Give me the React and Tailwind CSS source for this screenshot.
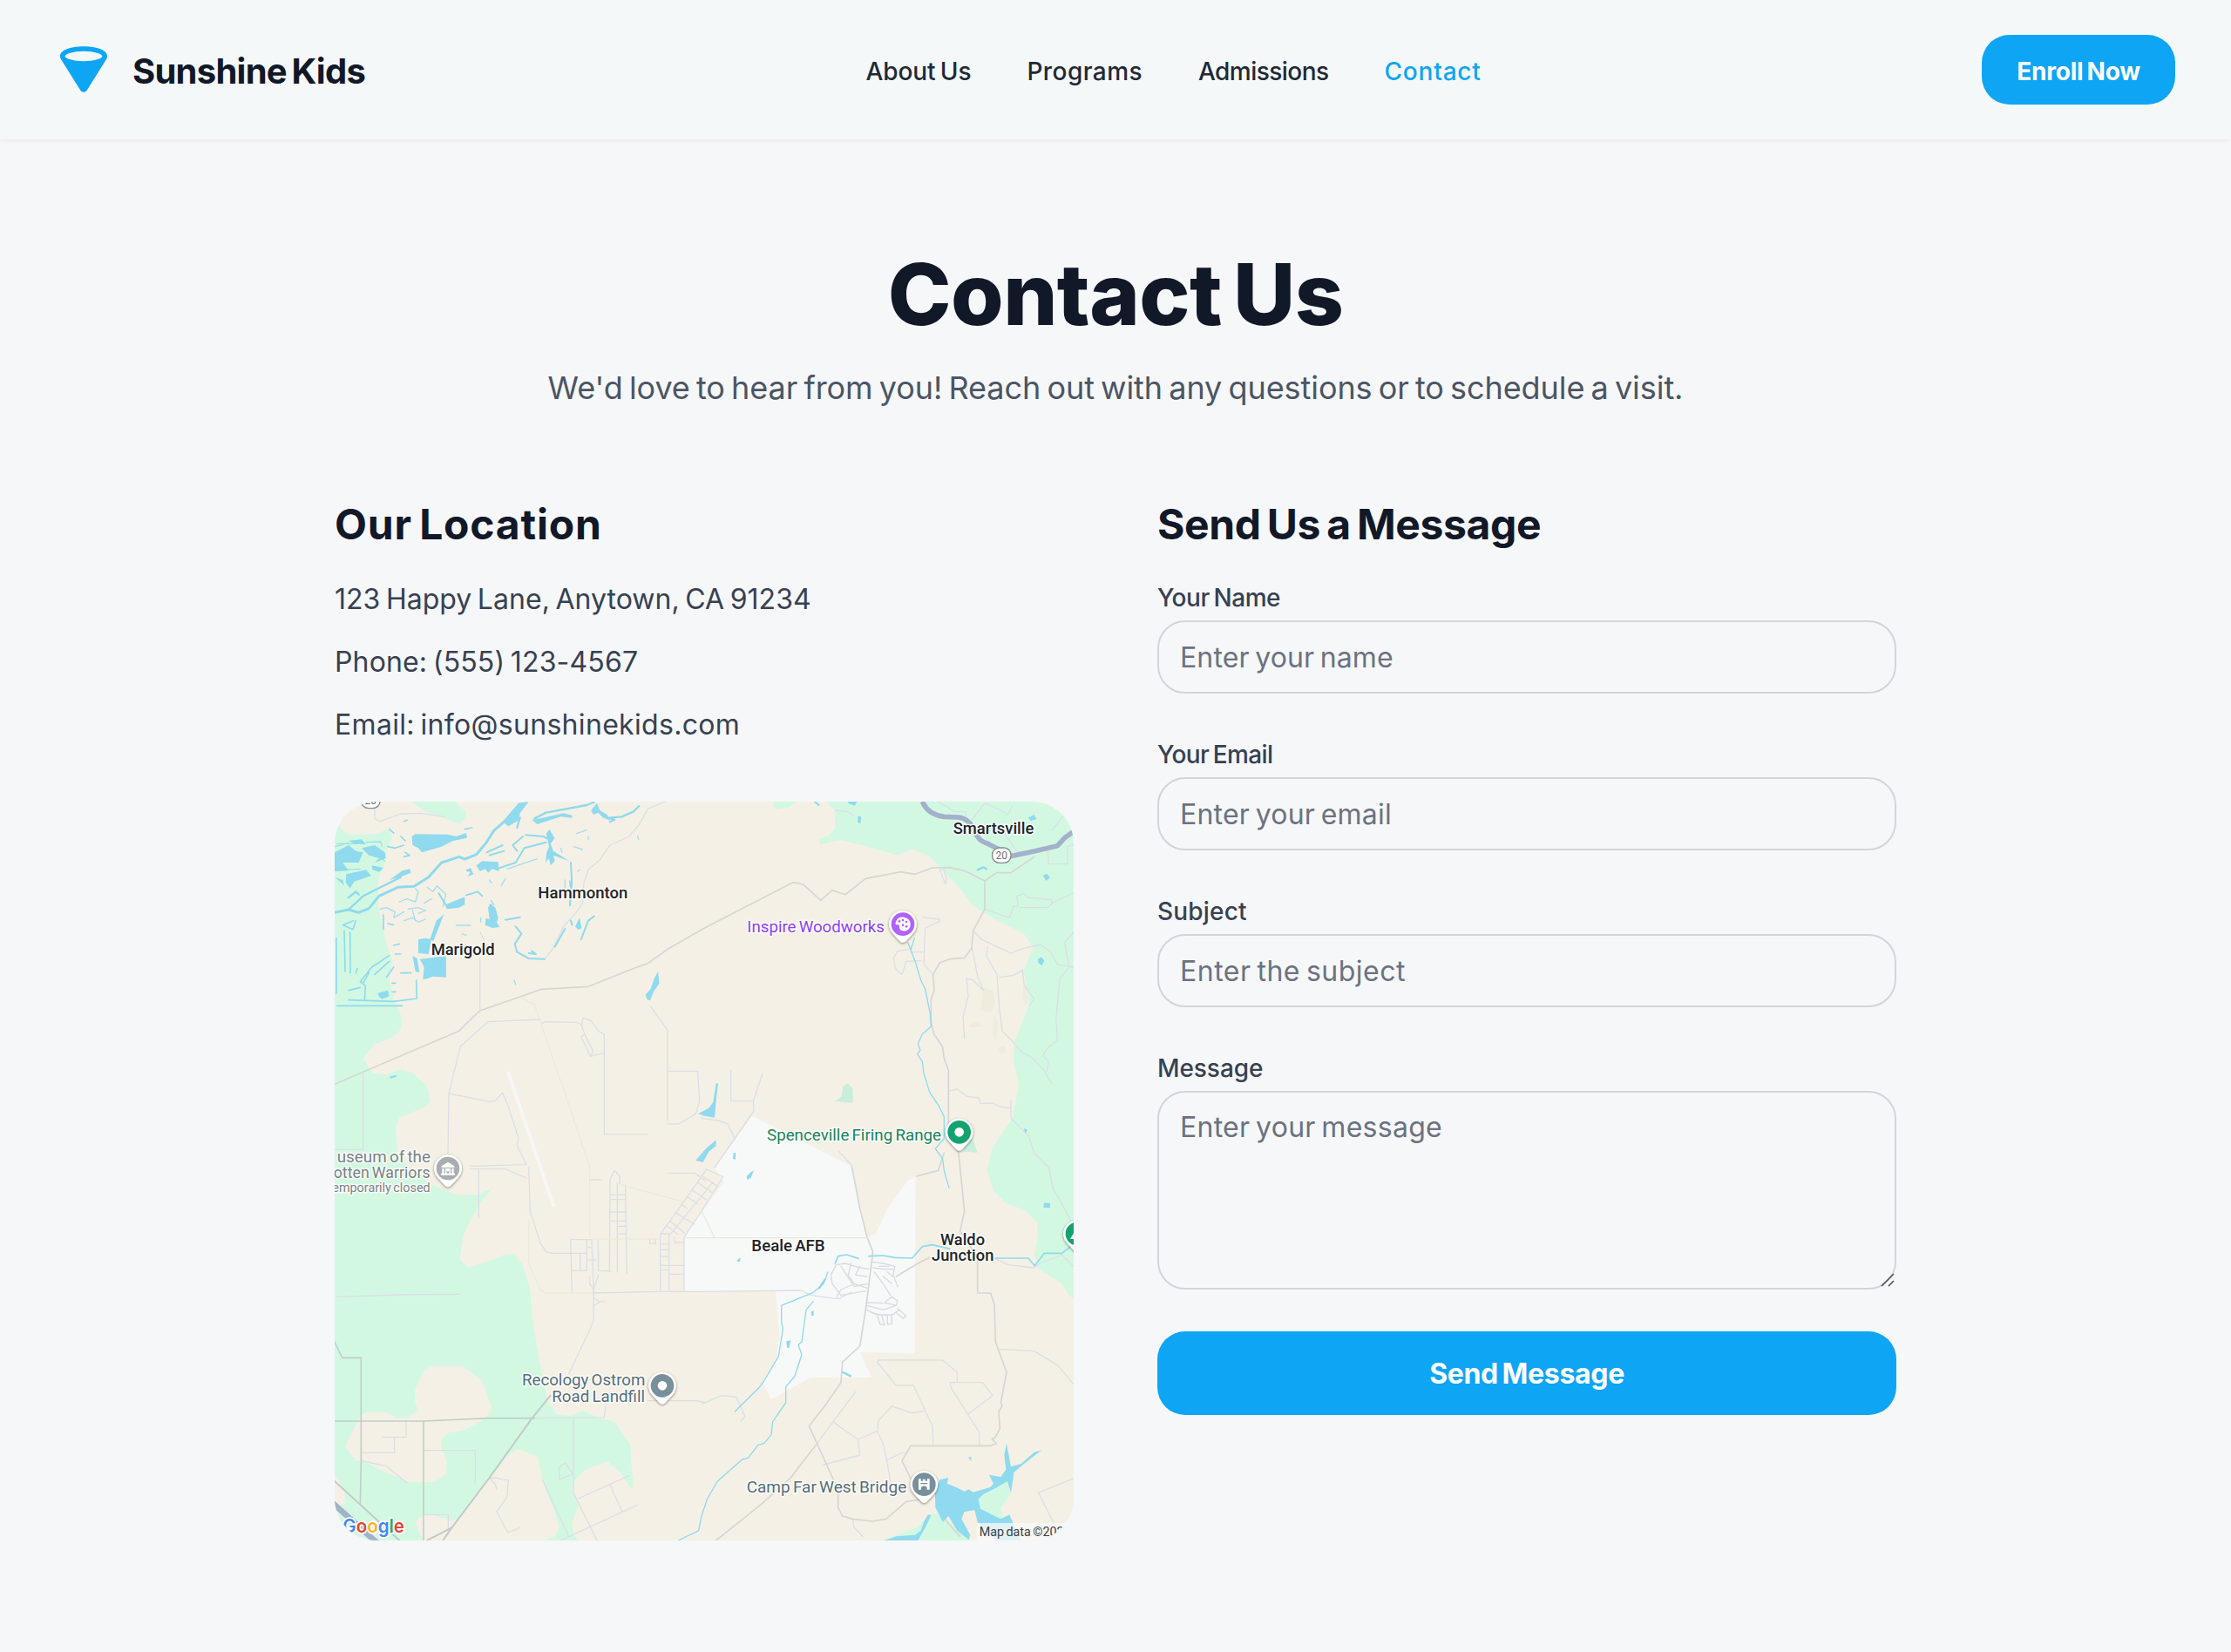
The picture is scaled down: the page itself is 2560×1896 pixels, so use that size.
import { useId } from "react";

const NAV = [
  { label: "About Us", className: "tracking-[-0.05px] text-[#1f2937]" },
  { label: "Programs", className: "tracking-[0.43px] text-[#1f2937]" },
  { label: "Admissions", className: "tracking-[-0.54px] text-[#1f2937]" },
  { label: "Contact", className: "tracking-[0.8px] text-[#0ea5f5]" },
];

const FIELDS = [
  {
    label: "Your Name",
    placeholder: "Enter your name",
    labelClass: "tracking-[-0.47px]",
    inputClass: "tracking-[0.12px]",
  },
  {
    label: "Your Email",
    placeholder: "Enter your email",
    labelClass: "tracking-[-0.62px]",
    inputClass: "tracking-[0.21px]",
  },
  {
    label: "Subject",
    placeholder: "Enter the subject",
    labelClass: "tracking-[0.18px]",
    inputClass: "tracking-[0.5px]",
  },
];

function Logo() {
  return (
    <svg viewBox="0 0 64 64" className="size-16" aria-hidden="true">
      <path
        fill="#0ea5f5"
        fillRule="evenodd"
        d="M32 5.2C17 5.2 5 9.2 5 16.4c0 1.6.6 3 1.6 4.6L28.200 55.600c1.800 2.900 5.800 2.900 7.600 0L57.400 21c1-1.600 1.600-3 1.600-4.600C59 9.200 47 5.200 32 5.200ZM32 10.800c12 0 21.400 3.200 21.400 5.700S44 22.200 32 22.200 10.600 19 10.600 16.500 20 10.800 32 10.800Z"
      />
    </svg>
  );
}

function Header() {
  return (
    <header className="relative flex h-40 items-center justify-between bg-[#f4f8f9] px-16 shadow-[0_2px_4px_rgba(0,0,0,0.05)]">
      <div className="flex items-center gap-6">
        <Logo />
        <span className="pt-[3px] text-[40px] leading-none font-bold tracking-[-0.74px] text-[#111827]">
          Sunshine Kids
        </span>
      </div>
      <nav className="flex items-center gap-16 pt-1">
        {NAV.map((item) => (
          <a key={item.label} className={`text-[28px] leading-10 font-medium ${item.className}`}>
            {item.label}
          </a>
        ))}
      </nav>
      <button className="flex h-20 w-[222px] items-center justify-center rounded-[32px] bg-[#0ea5f5] pt-[3px] text-[28px] leading-10 font-bold tracking-[-0.23px] text-white">
        Enroll Now
      </button>
    </header>
  );
}

const WEST_GREEN =
  "M12 100L30 115Q45 138 65 145L150 142L195 125L212 150L190 200L185 240L162 300V390L175 460L195 530L212 580L200 640L215 710L243 770L240 815L205 845L150 865L110 915L145 965L190 970L235 952L275 960L330 1010L342 1062L325 1080L270 1105L235 1118L222 1150L228 1240L270 1290L300 1310L350 1350L440 1385L500 1383L555 1362L520 1405L480 1470L455 1525L443 1605L470 1635L560 1605L600 1588H630L660 1625L685 1710L695 1830L720 1970L745 2090L775 2140L825 2145L865 2127L920 2150L975 2165L1030 2245L1035 2330L1042 2380L1035 2400L990 2335L950 2302L875 2330L838 2370L835 2410L850 2460L830 2510L835 2555L855 2574H730L770 2560L785 2530L765 2465L727 2365L710 2285L640 2258L600 2290L560 2345L500 2410L440 2500L410 2505L350 2487H315L290 2510L310 2560L315 2574H12Z";

function Land() {
  return (
    <>
      <rect x="12" y="30" width="2544" height="2544" fill="#f5f0e5" />
      <g fill="#d3f8e2">
        <path d={WEST_GREEN} />
        <path d="M275 30H425L465 65L463 88L440 107L320 62Z" />
        <path d="M1705 30L1733 60L1735 120L1715 145L1680 160L1683 178L1755 163L1835 182L1950 215L2000 193L2060 220L2095 255L2160 325L2210 390L2275 430L2385 485L2417 535L2383 610L2403 730L2350 860V930L2367 1000L2345 1120L2275 1225L2257 1300L2280 1370L2325 1415L2385 1435L2430 1480L2432 1540L2420 1590L2435 1640L2515 1690L2540 1730L2560 1745V30Z" />
        <path d="M1520 45L1530 56L1575 50L1605 30H1525Z" />
        <path d="M1895 2574L2015 2530L2065 2480L2105 2490L2200 2574Z" />
        <path d="M2220 2440L2330 2350L2355 2345L2335 2420L2305 2460L2315 2510L2360 2560H2300Z" />
      </g>
      <g fill="#f5f0e5">
        <path d="M345 1975H455L520 2025L552 2120L530 2155L455 2195L405 2202L378 2230L380 2260L398 2300L395 2345L355 2373H270L190 2340L110 2300H85L48 2250L85 2175L105 2140L125 2132H185L225 2152H265L298 2125L288 2090L290 2050L320 1990Z" />
        <path d="M12 2345L47 2405V2448L12 2460Z" />
      </g>
      <g fill="#c9eedb">
        <path d="M1778 1000L1796 1018V1067L1733 1063L1757 1045L1762 1010Z" />
        <path d="M2175 1235L2200 1170L2225 1238Z" />
      </g>
      <path
        fill="#f7f9f9"
        d="M1450 1112L1780 1280L1795 1300L1845 1530L1873 1520L1920 1425L1985 1335L2012 1322L2008 1930L1820 1925L1860 2013H1650L1515 2087L1487 2035L1535 1940L1540 1895L1523 1900L1545 1885L1530 1715H1215V1530L1290 1425L1350 1340L1320 1290Z"
      />
      <g fill="#efebdf">
        <path d="M2245 670L2280 680L2285 730L2270 755L2235 750Z" />
        <path d="M2280 765L2298 790L2290 855L2278 840Z" />
        <path d="M2195 800L2220 788L2245 803L2205 808Z" />
        <path d="M2295 880L2315 870L2325 890L2305 900Z" />
        <path d="M2385 650L2400 700L2392 735L2378 700Z" />
      </g>
    </>
  );
}

function Water() {
  return (
    <>
      <g fill="#8fdaee">
        <path d="M590 100L615 70L645 35L680 30L650 70L645 95L610 115Z" />
        <path d="M278 150L290 142L400 143L430 150L465 138L468 155L420 165L380 185L312 205L300 190L280 180Z" />
        <path d="M12 205L60 180L85 200L110 205L95 240L40 240L60 268L12 270Z" />
        <path d="M52 280L120 265L138 285L80 305L65 328L50 310Z" />
        <path d="M105 190L150 180L185 205L188 225L150 240L165 225L130 215Z" />
        <path d="M12 290L40 300L45 318Z" />
        <path d="M60 165L105 160L120 178L80 175Z" />
        <path d="M140 250L180 258L165 272L142 265Z" />
        <path d="M300 505L325 500L345 505L335 555L300 552Z" />
        <path d="M340 505L362 440L388 418L370 465L352 510Z" />
        <path d="M280 562L296 570L304 618L290 615Z" />
        <path d="M305 572L395 562L396 635L350 632L330 640L316 642L320 600Z" />
        <path d="M395 385L430 370L460 358L460 385L440 395L400 400Z" />
        <path d="M548 380L565 395L575 430L570 445L580 462L555 465L530 455L532 432L545 435L540 395Z" />
        <path d="M740 140L752 125L762 145L770 155L755 175L765 200L820 235L765 215L770 235L755 250L750 225L738 240L742 205L750 185Z" />
        <path d="M690 92L720 88L800 70L830 78L828 86L790 82L710 108Z" />
        <path d="M895 60L915 35L925 60L950 75L960 95L935 85L920 68L903 75Z" />
        <path d="M465 265L480 258L490 280L470 288L480 272L465 270ZM500 250L520 235L575 238L578 270L555 262L540 275L530 262L512 270Z" />
        <path d="M1082 695L1100 675L1112 640L1125 615L1130 655L1110 685L1098 715L1088 712Z" />
        <path d="M160 690L195 680L200 700L175 710L165 702ZM245 268L270 262L275 275L235 290L200 300Z" />
        <path d="M1263 1105L1300 1085L1315 1065L1325 1000L1332 1000L1325 1060L1320 1118L1285 1112Z" />
        <path d="M1255 1265L1290 1225L1325 1195V1215L1300 1235L1280 1272Z" />
        <path d="M820 300L832 310L828 335L820 320ZM840 460L855 430L862 465L850 472Z" />
        <path d="M1778 28H1810L1803 45L1780 35ZM1813 80L1825 82L1822 105L1812 102Z" />
        <path d="M2400 85L2420 75L2428 90L2408 97ZM2450 285L2462 278L2475 290L2462 303ZM2433 572L2445 565L2455 578L2446 595L2434 585Z" />
        <path d="M1385 1240L1392 1238V1262L1383 1260ZM1430 1320L1445 1305L1455 1300L1445 1325L1432 1332Z" />
        <path d="M1398 1608L1408 1600V1614H1398ZM1652 1785L1661 1783V1800H1653ZM1567 1888L1582 1885L1576 1912L1569 1910Z" />
        <path d="M2453 1412H2475V1428H2453ZM2193 2288L2203 2285V2300ZM2384 1155L2398 1160L2390 1172Z" />
        <path d="M2095 2365L2125 2358L2120 2378L2150 2390L2180 2405L2195 2398L2210 2408L2270 2390L2280 2378L2265 2348L2305 2355L2323 2330L2317 2280L2325 2240L2340 2320L2375 2310L2420 2270L2446 2263L2385 2310L2350 2340L2340 2410L2328 2370L2285 2395L2245 2415L2228 2432L2235 2465L2305 2500L2335 2485L2350 2520L2375 2574H2290L2225 2510L2215 2470L2180 2475L2170 2500L2200 2555L2195 2572L2155 2540L2125 2490L2105 2510L2080 2460L2078 2400Z" />
        <path d="M1905 2574L1945 2560L2010 2555L2030 2540L2040 2510L2055 2484L2065 2488L2045 2530L2020 2574Z" />
      </g>
      <g fill="none" stroke="#8fdaee" strokeLinejoin="round" strokeLinecap="round">
        <path strokeWidth="9" d="M12 412L60 402L95 412L130 398L165 355L230 325L285 322L335 290L380 240L440 220L460 228L500 212L535 170L560 130L600 95" />
        <path strokeWidth="7" d="M60 402L110 355L160 330L240 290M60 360L85 340L95 350M650 85L640 120M700 88L740 68L880 42L905 32M960 100L975 92L955 86L1000 82L1040 65L1060 45" />
        <path strokeWidth="6" d="M575 260L635 240L665 190L740 170M640 200L625 180L660 150M670 145L730 150M825 240L828 300L822 388M730 150L760 165M545 215L595 200M535 205L590 180M400 395L385 370L370 345M465 352L505 340L520 355M635 460L655 485L632 520L640 548L680 570L735 572M770 530L805 468M690 545L705 555L680 552M600 437L650 428M860 505L885 440L905 425M825 440L830 455" />
        <path strokeWidth="5" d="M20 733H245M60 713L215 718L295 708L293 645M45 475L48 615M65 480L66 620M18 500V690M115 710L118 665L100 650L140 600L200 560M60 680L100 670M150 625L200 580M110 655L130 620M75 440L40 455L75 470L85 440M90 605L85 620M190 635L215 600M240 620H275M210 655H222M210 685H222M215 525L235 520M220 555H240M180 420V470M195 450L215 455M195 185L220 190L250 180M255 205L270 215L250 220M240 150L255 165M200 125L215 138M250 98L262 94M460 125L485 120" />
        <path strokeWidth="4" opacity=".8" d="M168 400L190 395L220 410L215 430L250 410M235 375L260 365L290 375L300 340L290 330M320 380L345 365M330 325L350 340L365 320L395 350L385 390M265 400L300 395L325 405L300 415M250 440L280 430L300 445L325 435M280 405L290 440M430 456H480M450 485L465 490M515 430V445M550 370L560 385M585 320L600 295M545 300L552 310M850 270L855 265M805 300V330M630 645L635 660M605 262L710 227M15 185L60 172M20 175H90M120 170L170 168L175 185M140 200L185 235M20 265L100 262M790 190L795 205M835 185L865 195M885 150V160M845 140L880 128M1055 150L1058 160" />
        <path strokeWidth="4" d="M1985 515L1995 540L2008 500M1995 540L2012 585L2030 645L2045 675L2062 760L2065 805L2035 830L2020 865L2028 885L2018 900L2035 925L2040 965L2060 1030L2090 1075L2110 1115V1190L2080 1225L2105 1260L2110 1300L2127 1360" />
        <path strokeWidth="5" d="M1735 1620L1745 1595L1775 1590L1815 1603M1850 1595L1900 1593L1940 1600L2000 1602L2035 1562L2070 1556L2130 1570M2285 1602H2400L2422 1628L2455 1585L2515 1585L2555 1555" />
        <path strokeWidth="4" d="M1710 1650L1695 1690L1660 1720L1550 1765V1820L1555 1845L1540 1940L1490 2025L1475 2045L1390 2130M1660 1750L1635 1780L1620 1890L1608 1900L1620 1935L1595 2010L1565 2045V2100L1520 2165L1515 2210L1490 2240L1470 2245L1435 2290L1415 2295L1330 2370L1295 2430L1275 2490L1265 2540L1195 2574" />
        <path strokeWidth="7" d="M1680 1705L1700 1675M1762 1995L1772 2000L1788 2008M2225 265L2245 256L2255 262M205 980L222 975M1665 30L1678 42" />
      </g>
    </>
  );
}

function Roads() {
  return (
    <g fill="none" strokeLinejoin="round" strokeLinecap="round">
      <g stroke="#dadfe6" strokeWidth="4">
        <path d="M150 50V90L170 98L240 72L310 70L390 82M513 480L525 505M512 570V750M720 780L540 788L445 872L405 1035L402 1245M405 1035L545 1063L565 1060L590 1032L610 1080L645 1190L640 1215L672 1280L480 1285M725 795L735 788L845 790L862 798L868 775L895 785L920 820L940 832V1175H1090M872 830L902 890L893 907L940 895M860 840L893 907M860 840L872 830L862 798M1100 735L1158 818V1128M1158 958H1262L1268 1060L1255 1105L1195 1140H1158" />
        <path d="M1150 30L1090 55L1060 110L1025 150L960 180L925 230L885 265L870 310L865 380L845 410L800 460L760 540L735 572M1376 955V1061H1453L1455 1095L1320 1290M1485 965L1453 1061M1275 1120L1330 1128L1365 1140L1390 1190" />
        <path d="M110 965V1228H12M480 1295H600L670 1325M508 1300V1463M680 1290L685 1440L720 1550L740 1580L760 1585H880M824 1538H897M824 1538L829 1722M880 1538V1645H829M857 1585V1645M880 1608H912M897 1538L903 1710M919 1538L920 1645L963 1647M885 1565H897M1097 1535V1552H1117V1535M1182 1530V1548H1212" />
        <path d="M960 1330L975 1300L993 1320V1345M960 1330L958 1645M985 1345V1650M1013 1350L1018 1655M960 1384H1013M960 1400H1013M960 1443H985M985 1443H1013M960 1474H1013M985 1492H1013M985 1518H1013M895 1332H930M1290 1300L1140 1510L1133 1530V1712M1350 1320L1275 1440L1215 1530V1712M1163 1712V1525L1315 1340M1133 1518H1163M1133 1553H1163M1133 1573H1163M1133 1597H1163M1133 1627H1215M1163 1657H1215M1133 1643H1163M1155 1490L1195 1520M1168 1475L1215 1515M1185 1445L1250 1485M1205 1415L1225 1430M1225 1390L1262 1415M1240 1365L1290 1400M1260 1340L1310 1375M1280 1320L1330 1355M1160 1309H1250L1290 1335M1290 1295L1345 1320" />
        <path d="M20 1735L240 1728L440 1726M900 1722L1120 1717H1280L1620 1713L1650 1730L1745 1742L1790 1720M890 1665V1690L903 1710V1815L890 1850L818 2000M905 1740L925 1752H940M905 1765L925 1752M920 1660L903 1710" />
        <path d="M318 2264H496V2375M258 2160V2218H178M218 2218V2272H105M105 2300L190 2318L260 2375M318 2485H403V2540M545 2360L570 2358L590 2365L610 2365L605 2425L570 2475L608 2547L650 2530M545 2360L565 2380L570 2398M785 2365V2322L805 2307L832 2345L785 2365M834 2155V2410L915 2574M850 2430L1027 2350M960 2383L1003 2477M790 2574L1053 2452M727 2365L817 2560M1275 2105L1345 2075L1395 2080L1425 2148L1410 2162M945 2110L940 2150L830 2152L700 2153M1090 2093H1260L1290 2100" />
        <path d="M1805 2062L1665 2250M1730 2167L1813 2226L1880 2198L1900 2240L1912 2295L1925 2370M1813 2226L1820 2280L1695 2313M1880 2198L1885 2160L1930 2112L2000 2135L2040 2128M2073 2245L2070 2180L2005 2040H1945L1880 1960L1885 1953H2105L2155 1995V2030H2130L2135 2050L2230 2200L2232 2245M2155 2030H2242L2277 2075L2192 2140M1912 2298L1965 2272H1975M2300 1915L2420 1922L2500 1970L2555 2035M2555 2360L2435 2410L2450 2440L2490 2520M1795 2500L1800 2530L1830 2560" />
        <path d="M2035 428L2095 435V442L2045 465L2040 590L2072 625M1998 548H2035M2030 578L1980 580L1965 625L1945 610L1935 570L1950 545L1990 538M2095 265L2115 315L2118 290L2108 265ZM2210 475L2240 505L2340 552L2385 535L2440 522L2475 545L2500 590L2555 600M2207 535L2225 630L2245 680L2210 645L2187 638L2193 700L2175 770L2180 845M2260 530L2255 560L2292 625L2300 740L2310 820L2350 860L2380 895L2410 910L2450 950L2480 1000M2300 635L2350 628L2380 610L2385 660L2420 710L2405 730M2250 400L2335 430L2350 390H2365L2360 355L2385 347L2400 360L2480 368L2483 380L2465 395H2370M2555 345L2480 380M2555 480L2525 515L2540 600L2508 640L2495 780L2500 850L2465 880L2450 905L2470 925L2462 960M2125 1027L2155 1020L2190 1045L2230 1050L2235 1070L2280 1068L2300 1080L2340 1085V1120L2400 1180L2420 1240L2470 1290M2340 1060V1120" />
        <path d="M2090 30L2145 65H2185L2190 150M2205 95L2250 35L2305 60L2330 75L2345 45M2250 110L2310 130L2360 200L2400 210M2465 245H2535V185L2555 178M2467 200L2470 245M2480 130L2520 80M1735 60L1780 65L1800 80M2470 1290L2485 1360L2540 1460L2555 1500M2515 1590L2555 1630M1745 1232L1795 1285M2280 1600L2330 1625L2420 1635L2440 1620L2520 1590" />
      </g>
      <g stroke="#d6dbe2" strokeWidth="4">
        <path d="M1738 1625L1770 1620L1810 1632L1850 1640M1738 1625L1720 1660L1725 1690L1755 1730L1840 1715M1755 1630L1800 1700L1845 1690M1790 1620L1780 1660L1800 1690L1845 1705M1820 1630L1805 1660L1845 1665M1740 1735L1755 1710L1790 1695M1865 1615L1900 1620L1940 1630L1935 1660L1950 1700M1865 1635L1900 1640H1935M1870 1650L1900 1690L1925 1730M1900 1665L1930 1690M1885 1630H1920M1915 1650L1940 1670M1845 1765L1900 1780L1945 1765L1950 1750L1930 1735L1905 1755L1945 1765M1845 1755L1900 1757M1845 1780Q1880 1805 1935 1795L1955 1780M1880 1800L1890 1830L1905 1832L1895 1798M1915 1798V1830L1930 1828V1795M1945 1790L1970 1810L1978 1800L1950 1775" />
      </g>
      <g stroke="#d5d6d4" strokeWidth="5">
        <path d="M12 1003L440 820L480 780L512 750L725 676L885 667L1045 603L1090 587L1160 537L1290 463L1590 308L1625 315L1685 370L1725 335L1770 350L1840 295L1960 272L2010 280L2070 258L2130 257L2180 268L2250 303L2290 275L2340 275L2420 220M2250 303V400L2210 475L2205 535L2180 568L2130 572L2095 585L2072 625L2076 680L2065 710V790L2075 830L2105 875L2110 915L2125 955V1150L2160 1240L2170 1340L2180 1440L2165 1510L2225 1600V1722H2270L2283 1760L2287 1890L2325 1995L2305 2100L2310 2110L2298 2130L2302 2190L2285 2220L2275 2225L2290 2240L2270 2248H1995L1965 2300L2000 2370M2085 2450L2120 2510L2165 2560M2050 2430L1980 2440L1910 2500L1860 2508L1795 2500L1760 2490L1745 2460V2400L1645 2180L1700 2110L1755 2030L1760 1960L1820 1905L1840 1780L1850 1700L1865 1580L1845 1530L1820 1430L1793 1290M1665 2250L1580 2360L1480 2450L1325 2574M1945 1665L2020 1620L2060 1600M2015 1320L2090 1300M2110 1240L2090 1300" />
        <path d="M12 1890L38 1945H103V2300L100 2450M12 2163H320L540 2153H700M318 2163V2574" stroke="#bed0ca" />
        <path d="M755 2075L690 2155L545 2358L415 2530L330 2574M415 2530L385 2574M12 2370L235 2574" stroke="#c1cbca" strokeWidth="6" />
      </g>
      <g stroke="#e9eadd" strokeWidth="4">
        <path d="M655 705L700 730L720 790L800 1020L890 1290V1530M680 1470V1620L720 1710L740 1722H900M1000 1350L1220 1410M1275 1440L1320 1532M900 1536H1130M1215 1532H1850" />
      </g>
      <g stroke="#f6f7f8" strokeWidth="11">
        <path d="M610 965L765 1420" />
      </g>
      <g stroke="#a3b1cb" strokeWidth="17">
        <path d="M2035 30Q2055 75 2110 82L2160 84Q2195 88 2215 130Q2225 165 2260 175L2300 195M2320 222L2410 203L2500 182L2525 155L2560 130" strokeLinecap="butt" />
        <path d="M5 2445L160 2584" strokeWidth="20" />
      </g>
    </g>
  );
}

function Pin({ x, y, color, filter, children }) {
  return (
    <g transform={`translate(${x} ${y})`}>
      <path
        d="M0 -47A47 47 0 0 1 34 33L10 59Q0 68 -10 59L-34 33A47 47 0 0 1 0 -47Z"
        fill="#fff"
        filter={filter}
      />
      <circle r="40" fill={color} />
      {children}
    </g>
  );
}

function Place({ x, y, width, color = "#202429", size = 54, weight = 400, children }) {
  return (
    <text
      x={x}
      y={y}
      textLength={width}
      lengthAdjust="spacingAndGlyphs"
      fontSize={size}
      fontWeight={weight}
      fill={color}
      stroke="#fff"
      strokeOpacity=".85"
      strokeWidth="9"
      strokeLinejoin="round"
      paintOrder="stroke"
    >
      {children}
    </text>
  );
}

function Shield({ x, y }) {
  return (
    <g transform={`translate(${x} ${y})`}>
      <rect x="-32" y="-26" width="64" height="52" rx="24" fill="#fff" stroke="#868b90" strokeWidth="4" />
      <text y="13" textAnchor="middle" fontSize="36" fill="#6b7075">
        20
      </text>
    </g>
  );
}

function LocationMap() {
  const shadow = useId();
  const filter = `url(#${shadow})`;
  return (
    <div className="size-[848px] overflow-hidden rounded-[48px]">
      <svg viewBox="12 30 2544 2544" className="size-full font-['Roboto',sans-serif]" role="img" aria-label="Map">
        <defs>
          <filter id={shadow} x="-30%" y="-30%" width="160%" height="160%">
            <feDropShadow dx="0" dy="3" stdDeviation="4" floodOpacity=".5" />
          </filter>
        </defs>
        <Land />
        <Roads />
        <Water />

        <Shield x={136} y={27} />
        <Shield x={2308} y={215} />

        <Place x={712} y={363} width={309} weight={500}>Hammonton</Place>
        <Place x={344} y={557} width={219} weight={500}>Marigold</Place>
        <Place x={2141} y={141} width={278} weight={500}>Smartsville</Place>
        <Place x={1447} y={1578} width={253} weight={500}>Beale AFB</Place>
        <Place x={2097} y={1556} width={153} weight={500}>Waldo</Place>
        <Place x={2067} y={1611} width={214} weight={500}>Junction</Place>
        <Place x={1432} y={479} width={473} color="#8a3ffc">Inspire Woodworks</Place>
        <Place x={1500} y={1197} width={600} color="#19835b">Spenceville Firing Range</Place>
        <Place x={657} y={2041} width={424} color="#546e7a">Recology Ostrom</Place>
        <Place x={760} y={2097} width={320} color="#546e7a">Road Landfill</Place>
        <Place x={1430} y={2409} width={551} color="#546e7a">Camp Far West Bridge</Place>
        <Place x={20} y={1271} width={322} color="#7c8184">useum of the</Place>
        <Place x={8} y={1327} width={333} color="#7c8184">otten Warriors</Place>
        <Place x={4} y={1374} width={337} size={42} color="#7c8184">emporarily closed</Place>

        <Pin x={1968} y={452} color="#b061ff" filter={filter}>
          <path
            d="M-24 -8Q-18 -26 4 -24Q26 -20 26 0T6 24Q-12 24 -12 10Q-10 0 -22 2Q-28 0 -24 -8Z"
            fill="#fff"
          />
          <g fill="#b061ff">
            <circle cx="-12" cy="-10" r="4" />
            <circle cx="0" cy="-14" r="4" />
            <circle cx="12" cy="-8" r="4" />
            <circle cx="0" cy="3" r="4" />
            <circle cx="12" cy="8" r="4" />
          </g>
        </Pin>
        <Pin x={2162} y={1168} color="#14a36f" filter={filter}>
          <circle r="16" fill="#fff" />
        </Pin>
        <Pin x={2568} y={1518} color="#14a36f" filter={filter}>
          <path d="M-24 18L0 -22L24 18Z" fill="#fff" />
        </Pin>
        <Pin x={1140} y={2041} color="#78909c" filter={filter}>
          <circle r="16" fill="#fff" />
        </Pin>
        <Pin x={2041} y={2381} color="#78909c" filter={filter}>
          <path
            d="M-19 -20H-11V-12H-4V-18H4V-12H11V-20H19V18H10V10Q0 0 -10 10V18H-19Z"
            fill="#fff"
          />
          <path d="M-12 -3H12" stroke="#78909c" strokeWidth="4" />
        </Pin>
        <Pin x={402} y={1293} color="#a9afb1" filter={filter}>
          <path
            d="M-22 -8L0 -22L22 -8V-3H-22ZM-20 0H-13V17H-20ZM13 0H20V17H13ZM-24 17H24V23H-24ZM-9 17V0H9V17H4V6L0 11L-4 6V17Z"
            fill="#fff"
          />
        </Pin>

        <text
          x="40"
          y="2546"
          textLength="212"
          lengthAdjust="spacingAndGlyphs"
          fontSize="66"
          fontWeight="600"
          className="font-['Inter',sans-serif]"
          stroke="#fff"
          strokeWidth="10"
          strokeLinejoin="round"
          paintOrder="stroke"
        >
          <tspan fill="#4285f4">G</tspan>
          <tspan fill="#ea4335">o</tspan>
          <tspan fill="#fbb324">o</tspan>
          <tspan fill="#4285f4">g</tspan>
          <tspan fill="#34a853">l</tspan>
          <tspan fill="#ea4335">e</tspan>
        </text>

        <rect x="2222" y="2514" width="334" height="60" fill="#f8f8f8" fillOpacity=".78" />
        <text x="2231" y="2559" fontSize="43" fill="#3c4043" className="[word-spacing:0]">
          Map data ©2025
        </text>
      </svg>
    </div>
  );
}

function ContactForm() {
  return (
    <section>
      <h2 className="h-14 text-[48px] leading-14 font-bold tracking-[-0.37px] text-[#111827]">Send Us a Message</h2>
      <form className="mt-10 flex flex-col">
        {FIELDS.map((field) => (
          <label key={field.label} className="mb-[54px] flex flex-col gap-[10px]">
            <span className={`text-[28px] leading-8 font-medium text-[#374151] ${field.labelClass}`}>
              {field.label}
            </span>
            <input
              placeholder={field.placeholder}
              className={`h-[84px] w-full rounded-[32px] border-2 border-[#d1d5db] px-6 text-[32px] leading-10 placeholder:text-[#6b7280] ${field.inputClass}`}
            />
          </label>
        ))}
        <label className="flex flex-col gap-[10px]">
          <span className="text-[28px] leading-8 font-medium tracking-[-0.07px] text-[#374151]">Message</span>
          <span className="relative block h-[228px]">
            <textarea
              placeholder="Enter your message"
              className="block h-full w-full resize-none rounded-[32px] border-2 border-[#d1d5db] px-6 pt-[16px] text-[32px] leading-[48px] tracking-[0.27px] placeholder:text-[#6b7280]"
            />
            <svg viewBox="0 0 16 16" className="absolute right-[2px] bottom-[3px] size-4" aria-hidden="true">
              <path d="M1 15L15 1M9 15L15 9" stroke="#4b4b4b" strokeWidth="1.500" fill="none" />
            </svg>
          </span>
        </label>
        <button
          type="button"
          className="mt-12 flex h-24 items-center justify-center rounded-[32px] bg-[#0ea5f5] pt-[1px] text-[32px] leading-[48px] font-bold tracking-[-0.33px] text-white"
        >
          Send Message
        </button>
      </form>
    </section>
  );
}

export default function App() {
  return (
    <div className="min-h-[1896px] bg-[#f6f7f9] font-['Inter',sans-serif] **:[word-spacing:-0.08em]">
      <Header />
      <main className="mx-auto w-[1792px] pt-[130px]">
        <h1 className="text-center text-[98px] leading-[96px] font-extrabold tracking-[-0.55px] text-[#111827]">
          Contact Us
        </h1>
        <p className="mt-[31px] text-center text-[36px] leading-14 tracking-[-0.06px] text-[#4b5563]">
          We'd love to hear from you! Reach out with any questions or to schedule a visit.
        </p>
        <div className="mt-[101px] grid grid-cols-2 items-start gap-24">
          <section>
            <h2 className="h-14 text-[48px] leading-14 font-bold tracking-[0.8px] text-[#111827]">Our Location</h2>
            <div className="mt-[34px] flex flex-col gap-6 text-[32px] leading-[48px] text-[#374151]">
              <p className="tracking-[0.04px]">123 Happy Lane, Anytown, CA 91234</p>
              <p className="tracking-[0.15px]">Phone: (555) 123-4567</p>
              <p className="tracking-[0.31px]">Email: info@sunshinekids.com</p>
            </div>
            <div className="mt-16">
              <LocationMap />
            </div>
          </section>
          <ContactForm />
        </div>
      </main>
    </div>
  );
}
